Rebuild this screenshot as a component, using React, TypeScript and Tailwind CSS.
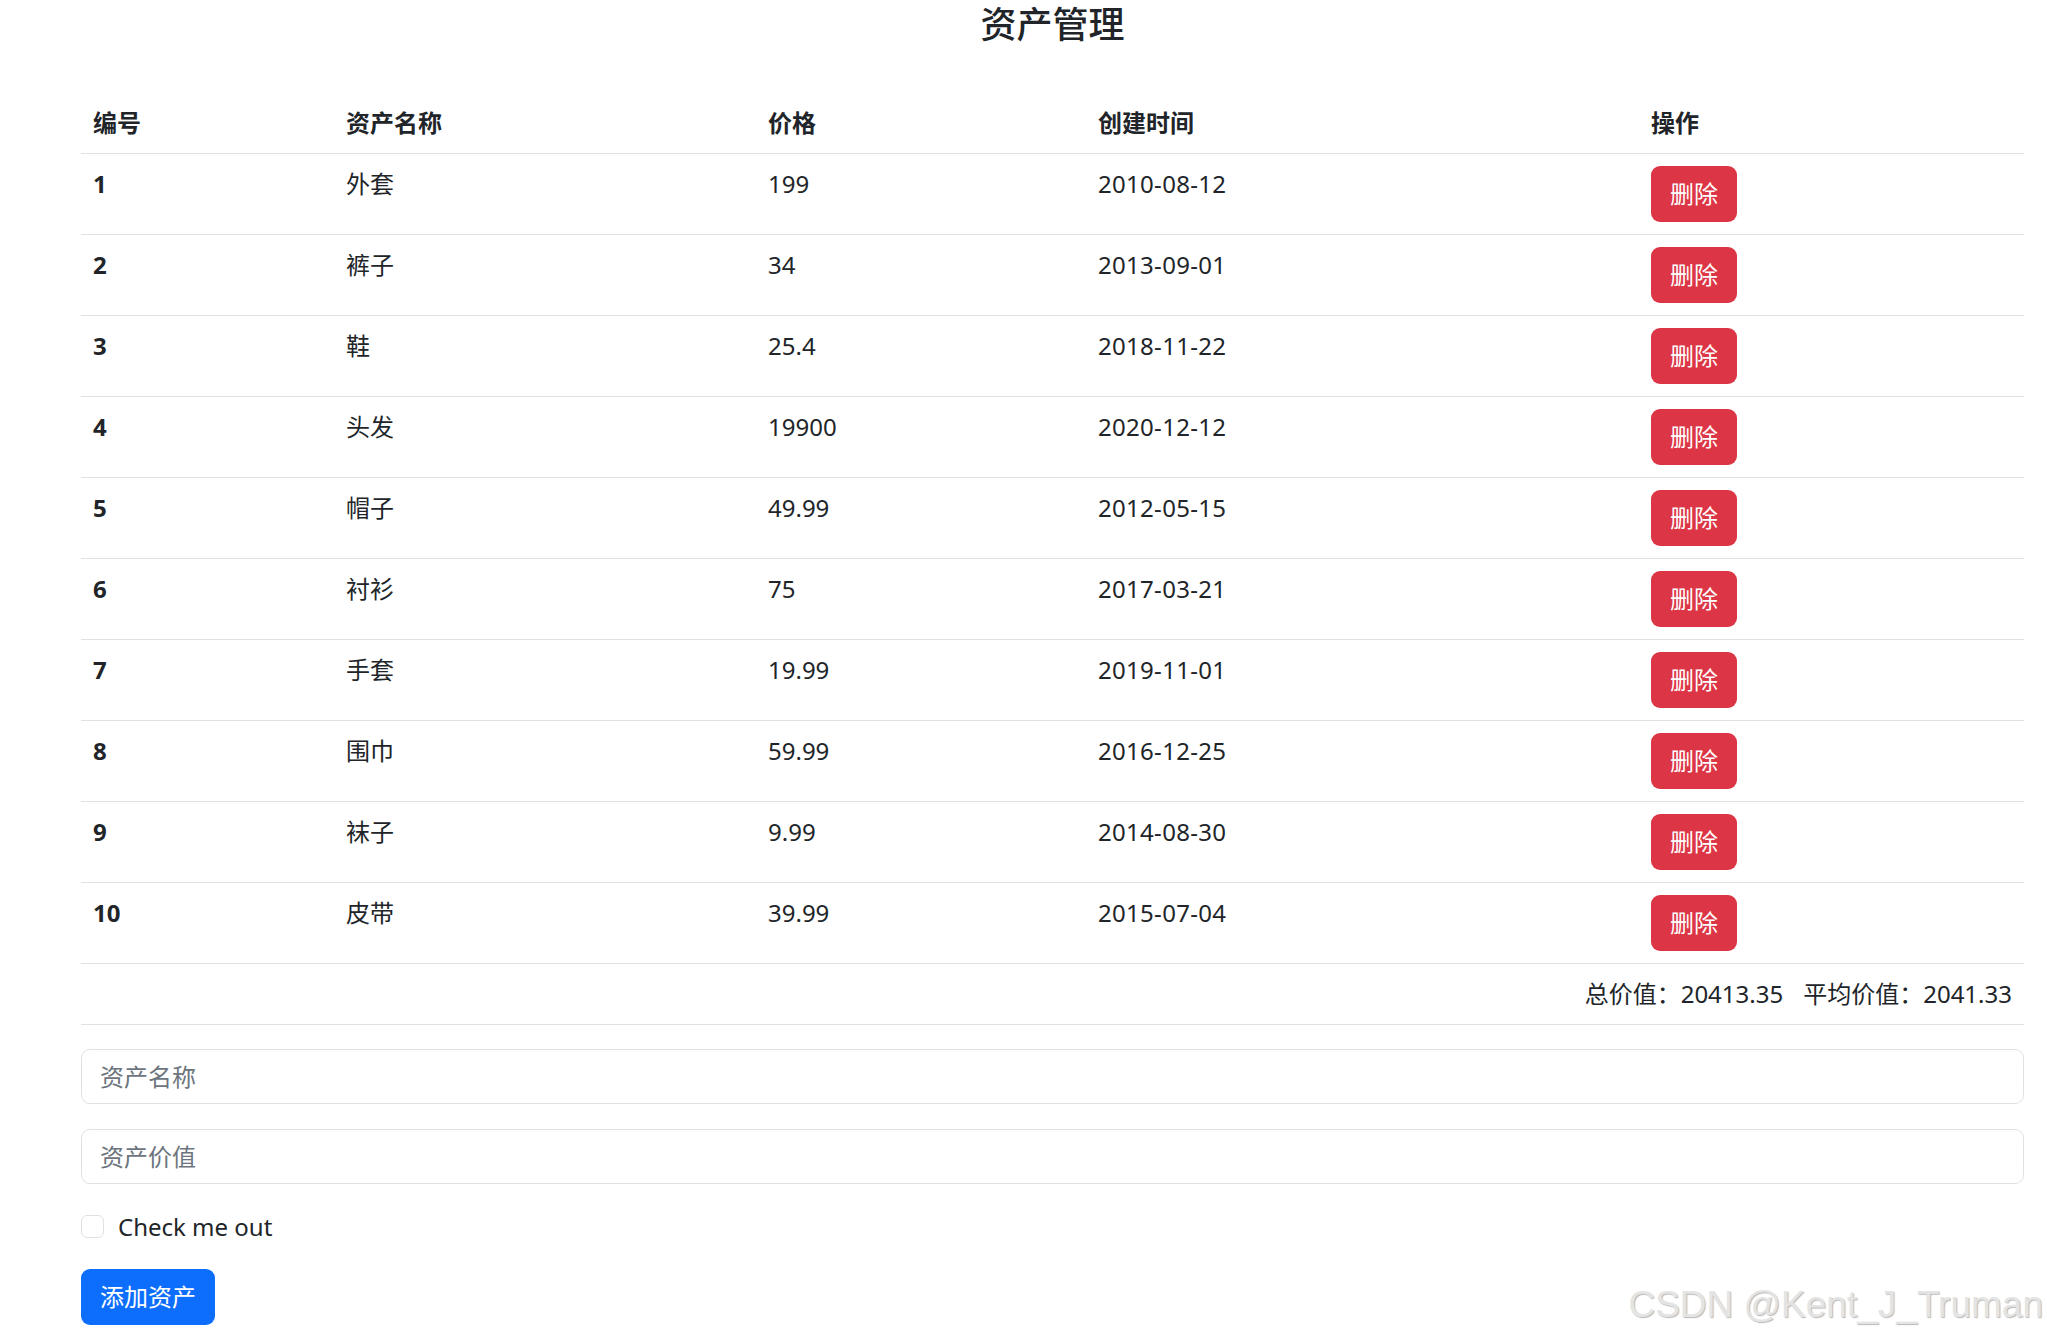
import React, { useState } from 'react';

interface Asset {
  id: number;
  name: string;
  price: number;
  created: string;
}

const initialAssets: Asset[] = [
  { id: 1, name: '外套', price: 199, created: '2010-08-12' },
  { id: 2, name: '裤子', price: 34, created: '2013-09-01' },
  { id: 3, name: '鞋', price: 25.4, created: '2018-11-22' },
  { id: 4, name: '头发', price: 19900, created: '2020-12-12' },
  { id: 5, name: '帽子', price: 49.99, created: '2012-05-15' },
  { id: 6, name: '衬衫', price: 75, created: '2017-03-21' },
  { id: 7, name: '手套', price: 19.99, created: '2019-11-01' },
  { id: 8, name: '围巾', price: 59.99, created: '2016-12-25' },
  { id: 9, name: '袜子', price: 9.99, created: '2014-08-30' },
  { id: 10, name: '皮带', price: 39.99, created: '2015-07-04' },
];

const font = { fontFamily: '"Noto Sans", "Noto Sans CJK SC", sans-serif' };

// keep two decimals, cut not rounded
const fmt = (n: number) => (Math.floor(n * 100 + 1e-6) / 100).toFixed(2);

export default function App() {
  const [assets, setAssets] = useState<Asset[]>(initialAssets);
  const [name, setName] = useState('');
  const [price, setPrice] = useState('');
  const [checked, setChecked] = useState(false);

  const total = assets.reduce((sum, a) => sum + a.price, 0);
  const avg = assets.length ? total / assets.length : 0;

  const handleAdd = () => {
    if (!name || !price) return;
    const nextId = assets.length ? Math.max(...assets.map(a => a.id)) + 1 : 1;
    setAssets([...assets, { id: nextId, name, price: Number(price), created: new Date().toISOString().slice(0, 10) }]);
    setName('');
    setPrice('');
  };

  return (
    <div className="relative min-h-[1342px] bg-white pl-[81px] pr-[23px] text-[24px] leading-[36px] text-[#212529]" style={font}>
      <h4 className="pt-[3px] text-center text-[36px] leading-[43px] font-medium">资产管理</h4>

      <table className="mt-[47px] w-full table-fixed border-collapse">
        <thead>
          <tr className="border-b border-[#dee2e6] text-left">
            <th className="w-[253px] p-[12px] font-bold">编号</th>
            <th className="w-[422px] p-[12px] font-bold">资产名称</th>
            <th className="w-[330px] p-[12px] font-bold">价格</th>
            <th className="w-[553px] p-[12px] font-bold">创建时间</th>
            <th className="p-[12px] font-bold">操作</th>
          </tr>
        </thead>
        <tbody>
          {assets.map(a => (
            <tr key={a.id} className="border-b border-[#dee2e6] align-top">
              <th className="p-[12px] text-left font-bold">{a.id}</th>
              <td className="p-[12px]">{a.name}</td>
              <td className="p-[12px]">{a.price}</td>
              <td className="p-[12px] tracking-[0.3px]">{a.created}</td>
              <td className="p-[12px]">
                <button
                  onClick={() => setAssets(assets.filter(x => x.id !== a.id))}
                  className="flex h-[56px] w-[86px] items-center justify-center rounded-[9px] bg-[#dc3545] text-white"
                >
                  删除
                </button>
              </td>
            </tr>
          ))}
          <tr className="border-b border-[#dee2e6]">
            <td colSpan={5} className="p-[12px] text-right">
              总价值：{fmt(total)}<span className="inline-block w-[20px]" />平均价值：{fmt(avg)}
            </td>
          </tr>
        </tbody>
      </table>

      <div className="mt-[24px] flex flex-col">
        <input
          value={name}
          onChange={e => setName(e.target.value)}
          placeholder="资产名称"
          className="h-[55px] w-full rounded-[9px] border-[1.5px] border-[#dee2e6] px-[18px] outline-none placeholder:text-[#6c757d]"
        />
        <input
          value={price}
          onChange={e => setPrice(e.target.value)}
          placeholder="资产价值"
          className="mt-[25px] h-[55px] w-full rounded-[9px] border-[1.5px] border-[#dee2e6] px-[18px] outline-none placeholder:text-[#6c757d]"
        />
        <label className="mt-[25px] flex h-[36px] items-start">
          <input
            type="checkbox"
            checked={checked}
            onChange={e => setChecked(e.target.checked)}
            className="mt-[6px] h-[23px] w-[23px] appearance-none rounded-[6px] border-[1.5px] border-[#dee2e6] bg-white checked:bg-[#0d6efd]"
          />
          <span className="ml-[14px]">Check me out</span>
        </label>
        <div className="mt-[24px]">
          <button
            onClick={handleAdd}
            className="h-[56px] w-[134px] rounded-[9px] bg-[#0d6efd] text-white"
          >
            添加资产
          </button>
        </div>
      </div>

      <div
        className="pointer-events-none absolute bottom-[14px] right-[4px] text-[37px] leading-[46px] text-[#e4e4e4] [text-shadow:1px_1px_1px_#b8b8b8]"
        style={{ fontFamily: '"Liberation Sans", Arial, sans-serif' }}
      >
        CSDN @Kent_J_Truman
      </div>
    </div>
  );
}
